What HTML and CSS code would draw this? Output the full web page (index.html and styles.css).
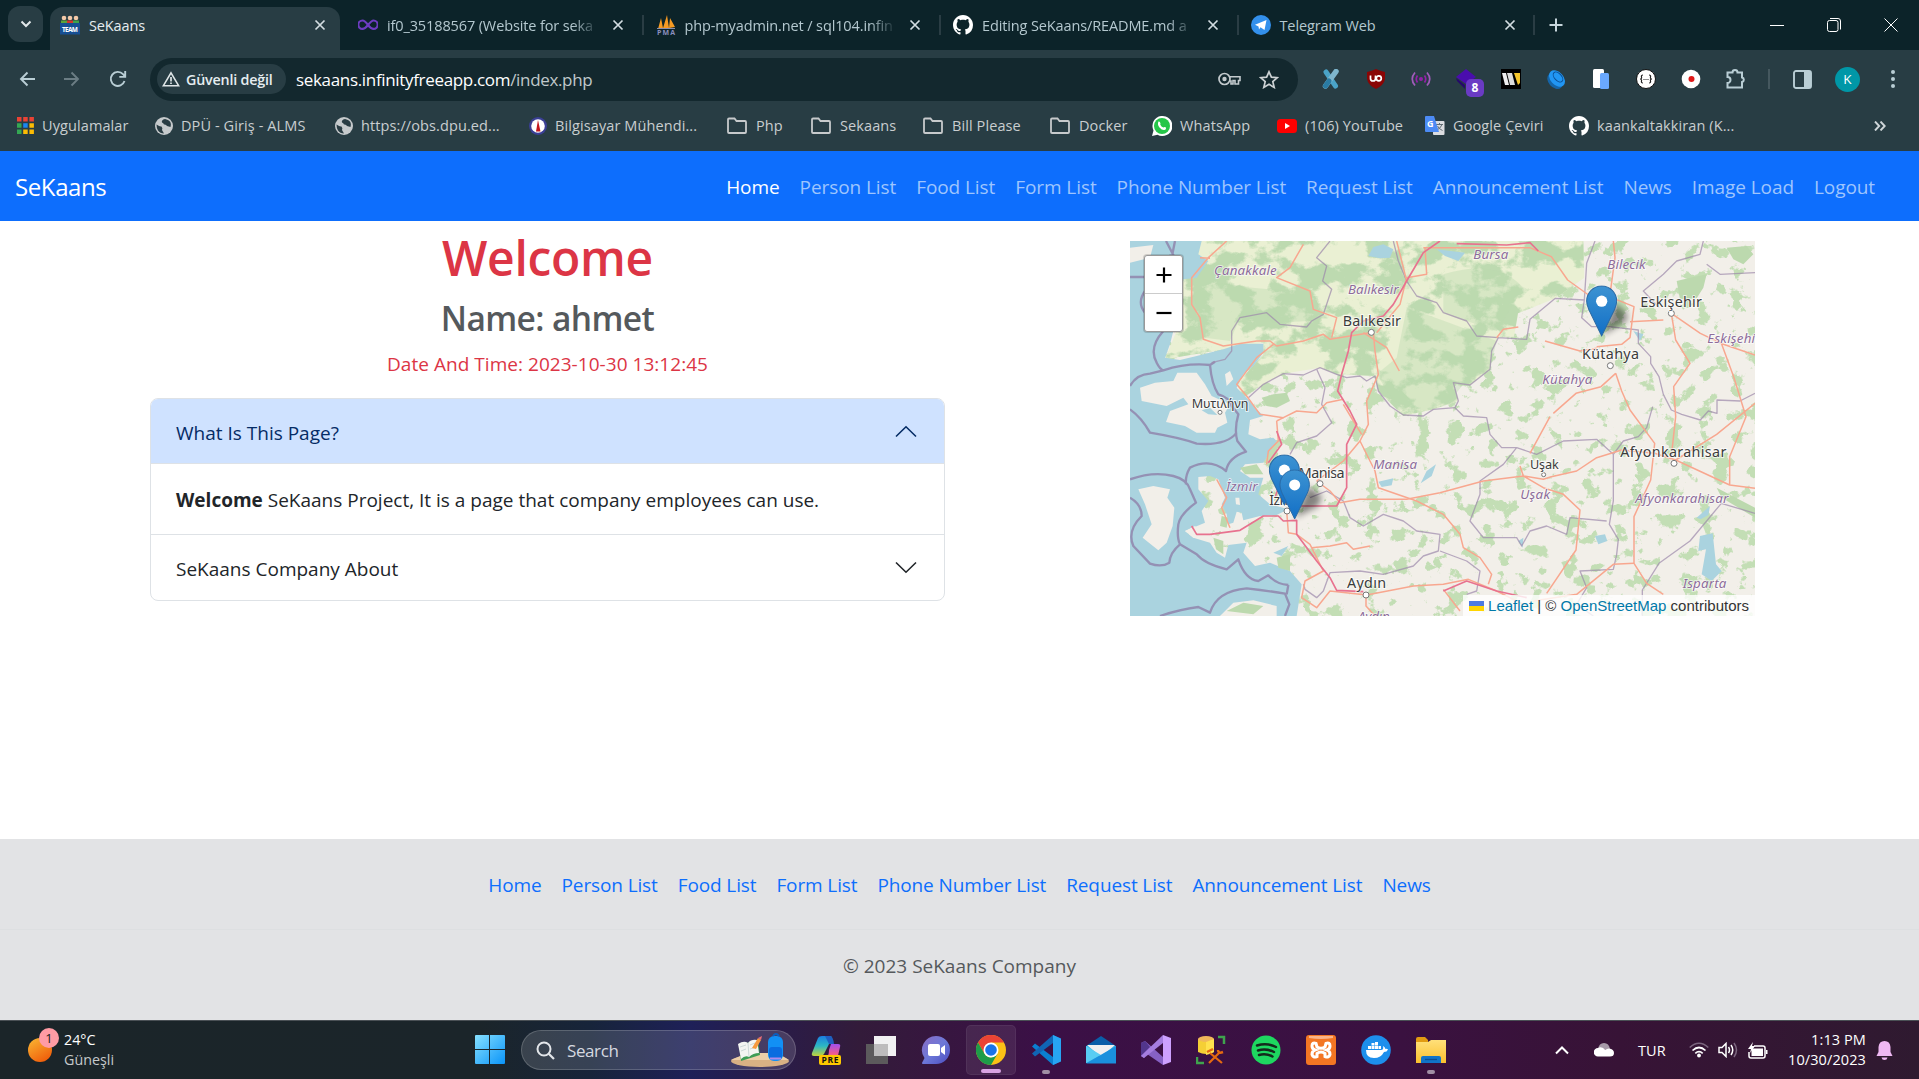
FILE: index.html
```html
<!DOCTYPE html>
<html lang="en">
<head>
<meta charset="utf-8">
<title>SeKaans</title>
<link rel="stylesheet" href="styles.css">
</head>
<body>
<svg class="defs" width="0" height="0">
  <defs>
    <linearGradient id="gPin" x1="0" y1="0" x2="0" y2="1"><stop offset="0" stop-color="#3d93d2"/><stop offset="1" stop-color="#126fc6"/></linearGradient>
    <linearGradient id="gSun" x1="0" y1="0" x2=".6" y2="1"><stop offset="0" stop-color="#f9b934"/><stop offset="1" stop-color="#f0600c"/></linearGradient>
    <linearGradient id="gWin" x1="0" y1="0" x2="1" y2="1"><stop offset="0" stop-color="#86e0ff"/><stop offset="1" stop-color="#0a94f8"/></linearGradient>
    <linearGradient id="gChat" x1="0" y1="0" x2="1" y2="1"><stop offset="0" stop-color="#8a6cc4"/><stop offset=".5" stop-color="#6d78d8"/><stop offset="1" stop-color="#4a4cc0"/></linearGradient>
    <linearGradient id="gCo1" x1="0" y1="0" x2="0" y2="1"><stop offset="0" stop-color="#1b7fe0"/><stop offset=".5" stop-color="#2cb7c4"/><stop offset="1" stop-color="#c3d43a"/></linearGradient>
    <linearGradient id="gCo2" x1="0" y1="0" x2="0" y2="1"><stop offset="0" stop-color="#a04ff0"/><stop offset=".6" stop-color="#ee5a90"/><stop offset="1" stop-color="#ff9a4a"/></linearGradient>
    <linearGradient id="gFold" x1="0" y1="0" x2="0" y2="1"><stop offset="0" stop-color="#ffe07a"/><stop offset="1" stop-color="#fbc02d"/></linearGradient>
    <symbol id="globe" viewBox="0 0 18 18"><circle cx="9" cy="9" r="9" fill="#c6cacc"/><path d="M1.5 7.5Q5 10 6.500 9.500Q8 11 7 13L9 16.500Q5 16.500 3 13.500Q1.500 11 1.500 7.500ZM10 2Q6 3 7 5.500Q8.500 6 9 7.500Q11 7 12 9L15.500 10Q17 5 13 3Z" fill="#2a3d44"/></symbol>
    <symbol id="folder" viewBox="0 0 22 18"><path d="M2 2.500Q2 1.500 3 1.500H8.500L10.500 4H19Q20 4 20 5V15Q20 16 19 16H3Q2 16 2 15Z" fill="none" stroke="#c7cacc" stroke-width="1.800"/></symbol>
    <symbol id="github" viewBox="0 0 16 16"><path fill="#fff" d="M8 0C3.580 0 0 3.580 0 8c0 3.540 2.290 6.530 5.470 7.590.4.070.550-.170.550-.380 0-.190-.010-.820-.010-1.490-2.010.370-2.530-.490-2.690-.940-.090-.230-.480-.940-.820-1.130-.280-.150-.680-.520-.010-.530.630-.010 1.080.580 1.230.820.720 1.210 1.870.870 2.330.660.070-.520.280-.870.510-1.070-1.780-.2-3.640-.890-3.640-3.950 0-.870.310-1.590.820-2.150-.080-.2-.360-1.020.080-2.120 0 0 .670-.210 2.200.820.640-.180 1.320-.270 2-.270s1.360.090 2 .270c1.530-1.040 2.200-.820 2.200-.820.440 1.100.160 1.920.080 2.120.510.560.820 1.270.820 2.150 0 3.070-1.870 3.750-3.650 3.950.290.250.540.730.540 1.480 0 1.070-.010 1.930-.010 2.200 0 .210.150.460.550.380A8 8 0 0 0 16 8c0-4.420-3.580-8-8-8"/></symbol>
    <symbol id="close" viewBox="0 0 12 12"><path d="M1.500 1.500 10.500 10.500M10.500 1.500 1.500 10.500" fill="none" stroke="currentColor" stroke-width="1.700"/></symbol>
    <symbol id="pin" viewBox="0 0 25 41"><path fill="url(#gPin)" stroke="#2a6aa5" stroke-width=".8" d="M12.500.500C5.900.500.500 5.900.500 12.600c0 2.300.9 4.700 1.800 6.900L12.500 40.400l10.200-20.900c.9-2.100 1.800-4.500 1.800-6.900C24.500 5.900 19.100.500 12.500.500z"/><circle cx="12.500" cy="12.700" r="4.500" fill="#fff"/></symbol>
  </defs>
</svg>

<header class="tabstrip">
  <button class="tab-search"><svg width="12" height="8" viewBox="0 0 12 8"><path d="M1.500 1.500 6 6 10.500 1.500" fill="none" stroke="#e2e8ea" stroke-width="2"/></svg></button>
  <div class="tab tab-active">
    <svg class="fav" viewBox="0 0 20 20"><circle cx="4" cy="3" r="2.300" fill="#f3c9a8"/><circle cx="10" cy="3" r="2.300" fill="#f3c9a8"/><circle cx="16" cy="3" r="2.300" fill="#f3c9a8"/><path d="M1 5.500h6v2.500H1z" fill="#5aa33a"/><path d="M7 5.500h6v2.500H7z" fill="#d2342c"/><path d="M13 5.500h6v2.500h-6z" fill="#3fa34d"/><path d="M0 8h20v11.500H0z" fill="#164f94"/><text x="10" y="16.500" font-size="6.500" font-weight="700" textLength="16" text-anchor="middle" fill="#fff">TEAM</text></svg>
    <span class="tab-title">SeKaans</span><svg class="x"><use href="#close"/></svg>
  </div>
  <div class="tab">
    <svg class="fav" viewBox="0 0 20 20"><path d="M10 10C7.500 6.500 6 5.500 4.500 5.500a4.200 4.200 0 0 0 0 8.400C6 13.900 7.500 13 10 10S14 5.500 15.500 5.500a4.200 4.200 0 0 1 0 8.400C14 13.900 12.500 13 10 10" fill="none" stroke="#6d3cc0" stroke-width="2.200"/></svg>
    <span class="tab-title fade">if0_35188567 (Website for seka</span><svg class="x"><use href="#close"/></svg>
  </div>
  <div class="tab">
    <svg class="fav" viewBox="0 0 20 20"><path d="M2 14 5 3 7 13ZM7 13 11 0 13 13ZM13 13 14 3 19 12Z" fill="#f59a23"/><path d="M1 13h18v1H1z" fill="#8a8fb0"/><text x="10" y="19.500" font-size="7" font-weight="700" textLength="18" text-anchor="middle" fill="#8b8fbe">PMA</text></svg>
    <span class="tab-title fade">php-myadmin.net / sql104.infin</span><svg class="x"><use href="#close"/></svg>
  </div>
  <div class="tab">
    <svg class="fav"><use href="#github"/></svg>
    <span class="tab-title fade">Editing SeKaans/README.md a</span><svg class="x"><use href="#close"/></svg>
  </div>
  <div class="tab">
    <svg class="fav" viewBox="0 0 20 20"><circle cx="10" cy="10" r="10" fill="#3390ec"/><path d="M4 9.800 15.500 5 13.500 15 9.500 12.200 8 14.500 7.500 11.500Z" fill="#fff"/></svg>
    <span class="tab-title">Telegram Web</span><svg class="x"><use href="#close"/></svg>
  </div>
  <svg class="newtab" viewBox="0 0 14 14"><path d="M7 .500V13.500M.500 7H13.500" stroke="#c7d6dc" stroke-width="2"/></svg>
  <div class="winbtns">
    <svg width="14" height="14"><path d="M0 7.500H14" stroke="#fff"/></svg>
    <svg width="14" height="14"><rect x=".5" y="2.500" width="10.500" height="11" rx="2" fill="none" stroke="#fff"/><path d="M3 .500H11Q13.500.500 13.500 3V11.500" fill="none" stroke="#fff"/></svg>
    <svg width="14" height="14"><path d="M.500.500 13.500 13.500M13.500.500.500 13.500" stroke="#fff"/></svg>
  </div>
</header>

<div class="toolbar">
  <svg width="16" height="16" viewBox="0 0 16 16"><path d="M16 8H2M8.500 1.500 2 8l6.500 6.500" fill="none" stroke="#b9ced5" stroke-width="1.900"/></svg>
  <svg width="16" height="16" viewBox="0 0 16 16"><path d="M0 8H14M7.500 1.500 14 8l-6.500 6.500" fill="none" stroke="#6b7d84" stroke-width="1.900"/></svg>
  <svg width="18" height="18" viewBox="0 0 18 18"><path d="M15.500 11A7 7 0 1 1 14 4.200L16 6.500M16.200 1V6.900H10.300" fill="none" stroke="#b9ced5" stroke-width="1.900"/></svg>
  <div class="omnibox">
    <div class="chip"><svg width="18" height="16" viewBox="0 0 18 16"><path d="M9 1.800 16.600 14.700H1.400Z" fill="none" stroke="#dfe5e7" stroke-width="1.600"/><path d="M9 6V10.500M9 11.500V13" stroke="#dfe5e7" stroke-width="1.700"/></svg><span>Güvenli değil</span></div>
    <div class="url">sekaans.infinityfreeapp.com<span>/index.php</span></div>
    <svg class="key" width="23" height="14" viewBox="0 0 23 14"><circle cx="6.500" cy="7" r="5.500" fill="none" stroke="#c3cacd" stroke-width="1.700"/><circle cx="6.500" cy="7" r="2.200" fill="#c3cacd"/><path d="M11.500 4.800H22V8.500H20.500V12H17V8.500H15V12H13V9H11.500" fill="none" stroke="#c3cacd" stroke-width="1.600"/></svg>
    <svg width="20" height="19" viewBox="0 0 20 19"><path d="M10 1.800 12.400 7.200 18.300 7.700 13.800 11.600 15.200 17.400 10 14.300 4.800 17.400 6.200 11.600 1.700 7.700 7.600 7.200Z" fill="none" stroke="#cdd2d4" stroke-width="1.700"/></svg>
  </div>
  <div class="exts">
    <svg viewBox="0 0 20 20"><path d="M5 3 14.500 17" stroke="#4aa3c7" stroke-width="5" stroke-linecap="round"/><path d="M15 2.500 4.500 17" stroke="#7fb6cd" stroke-width="5.500" stroke-linecap="round"/><path d="M8 12 4.500 17" stroke="#2a7ba3" stroke-width="5" stroke-linecap="round"/></svg>
    <svg viewBox="0 0 20 20"><path d="M10 0Q14 2 19 3V10Q18 16 10 20Q2 16 1 10V3Q6 2 10 0Z" fill="#8a0505"/><path d="M4.500 6.500V9.500Q4.500 12 7 12T9.500 9.500V6.500" fill="none" stroke="#fff" stroke-width="1.700"/><circle cx="12.800" cy="9.300" r="2.500" fill="none" stroke="#fff" stroke-width="1.700"/></svg>
    <svg viewBox="0 0 20 20"><g fill="none" stroke="#a05cba" stroke-width="1.700"><path d="M4 3.500Q-1.500 10 4 16.500M16 3.500Q21.500 10 16 16.500"/><path d="M6.500 6.500Q4 10 6.500 13.500M13.500 6.500Q16 10 13.500 13.500" stroke="#9320a8"/></g><circle cx="10" cy="10" r="2" fill="#9320a8"/></svg>
    <span class="badged"><svg viewBox="0 0 20 20"><path d="M10 0 20 8 10 15 0 8Z" fill="#4a0dae"/><path d="M0 9 9 16V20L1 12Z" fill="#25086b"/></svg><b>8</b></span>
    <svg viewBox="0 0 20 20"><path d="M0 0H20V20H0Z" fill="#000"/><path d="M1 4H5L8 16H4Z" fill="#eee"/><path d="M6 4H11L14 16H9Z" fill="#ddd"/><path d="M13 4H19V14L17 16Z" fill="#f5c52b"/></svg>
    <svg viewBox="0 0 20 20"><ellipse cx="9" cy="12" rx="6.500" ry="9" fill="#1565a8" transform="rotate(-42 9 12)"/><ellipse cx="11" cy="9.500" rx="6.500" ry="9.500" fill="#2196f3" transform="rotate(-42 11 9.500)"/><ellipse cx="12" cy="8" rx="3.500" ry="6" fill="none" stroke="#0c4f94" transform="rotate(-42 12 8)"/></svg>
    <svg viewBox="0 0 20 20"><rect x="2" y="0" width="11" height="19" rx="1.500" fill="#fff"/><rect x="9" y="4" width="9" height="16" rx="1.500" fill="#6aa9ff"/></svg>
    <svg viewBox="0 0 20 20"><circle cx="10" cy="10" r="9.500" fill="#fff" stroke="#111" stroke-width="1"/><path d="M7 6Q5 6 5.500 8T4 10Q6 10 5.500 12T7 14M13 6Q15 6 14.500 8T16 10Q14 10 14.500 12T13 14" fill="none" stroke="#222" stroke-width="1.200"/><path d="M7.500 10.500H12.500" stroke="#222" stroke-dasharray="1 1"/></svg>
    <svg viewBox="0 0 20 20"><circle cx="10" cy="10" r="9.300" fill="#fff"/><circle cx="10.500" cy="10" r="3" fill="#e01818"/></svg>
    <svg viewBox="0 0 20 20"><path d="M1.500 3.500H6.500A2.300 2.300 0 0 1 11.500 3.500H16V8.500A2.300 2.300 0 0 1 16 13V18.500H1.500V14A3 3 0 0 0 1.500 8Z" fill="none" stroke="#b9ced5" stroke-width="2"/></svg>
  </div>
  <i class="vsep"></i>
  <svg class="panel" width="19" height="19" viewBox="0 0 19 19"><rect x="1" y="1" width="17" height="17" rx="2" fill="none" stroke="#b9ced5" stroke-width="1.900"/><path d="M11 1H18V18H11Z" fill="#b9ced5"/></svg>
  <div class="avatar">K</div>
  <svg class="dots" width="4" height="18" viewBox="0 0 4 18" fill="#b9ced5"><circle cx="2" cy="2" r="2"/><circle cx="2" cy="9" r="2"/><circle cx="2" cy="16" r="2"/></svg>
</div>

<nav class="bookmarks">
  <a><svg width="17" height="17" viewBox="0 0 17 17"><path d="M0 0H4.500V4.500H0ZM6.200 0H10.700V4.500H6.200ZM12.400 0H16.900V4.500H12.400Z" fill="#ea4335"/><path d="M0 6.200H4.500V10.700H0ZM0 12.400H4.500V16.900H0Z" fill="#34a853"/><path d="M6.200 6.200H10.700V10.700H6.200Z" fill="#1a86f0"/><path d="M12.400 6.200H16.900V10.700H12.400ZM6.200 12.400H10.700V16.900H6.200ZM12.400 12.400H16.900V16.900H12.400Z" fill="#fbbc04"/></svg><span>Uygulamalar</span></a>
  <a><svg width="18" height="18"><use href="#globe"/></svg><span>DPÜ - Giriş - ALMS</span></a>
  <a><svg width="18" height="18"><use href="#globe"/></svg><span>https://obs.dpu.ed...</span></a>
  <a><svg width="18" height="18" viewBox="0 0 18 18"><circle cx="9" cy="9" r="9" fill="#3a3f95"/><circle cx="9" cy="9" r="6.800" fill="#fff"/><path d="M9 3 11.500 14.500H7Z" fill="#c4161c"/></svg><span>Bilgisayar Mühendi...</span></a>
  <a><svg width="22" height="18"><use href="#folder"/></svg><span>Php</span></a>
  <a><svg width="22" height="18"><use href="#folder"/></svg><span>Sekaans</span></a>
  <a><svg width="22" height="18"><use href="#folder"/></svg><span>Bill Please</span></a>
  <a><svg width="22" height="18"><use href="#folder"/></svg><span>Docker</span></a>
  <a><svg width="20" height="20" viewBox="0 0 20 20"><path d="M0 20 1.500 14.500A10 10 0 1 1 5.500 18.700Z" fill="#fff"/><circle cx="10" cy="10" r="8" fill="#25c648"/><path d="M6.500 5.500Q8 5 8.500 7.500Q8 8.500 8.500 9Q9.500 11 11.500 11.500Q12.500 10.500 14 11.500Q14.500 13.500 12.500 14Q10 14.500 7.500 11.500Q5 8.500 6.500 5.500Z" fill="#fff"/></svg><span>WhatsApp</span></a>
  <a><svg width="20" height="14" viewBox="0 0 20 14"><rect width="20" height="14" rx="3.500" fill="#f00"/><path d="M8 4 13 7 8 10Z" fill="#fff"/></svg><span>(106) YouTube</span></a>
  <a><svg width="20" height="20" viewBox="0 0 20 20"><rect x="8" y="5" width="11.500" height="14" rx="1" fill="#dadce0"/><path d="M11 8.500H18M14.500 7V8.500M17 8.500Q15.500 12.500 12 14M12.500 10Q14 13 17.500 14.500" stroke="#5f6b72" fill="none"/><path d="M0 1Q0 0 1 0H9L14 16H1Q0 16 0 15Z" fill="#4c8bf5"/><text x="2" y="10.500" font-size="9" font-weight="700" fill="#fff">G</text></svg><span>Google Çeviri</span></a>
  <a><svg width="20" height="20"><use href="#github"/></svg><span>kaankaltakkiran (K...</span></a>
  <a class="more"><svg width="12" height="10" viewBox="0 0 12 10"><path d="M1 .500 5.200 5 1 9.500M6.500.500 10.700 5 6.500 9.500" fill="none" stroke="#cfd6d9" stroke-width="1.900"/></svg></a>
</nav>

<nav class="navbar">
  <a class="brand">SeKaans</a>
  <div class="links"><a class="current">Home</a><a>Person List</a><a>Food List</a><a>Form List</a><a>Phone Number List</a><a>Request List</a><a>Announcement List</a><a>News</a><a>Image Load</a><a>Logout</a></div>
</nav>

<main class="content">
  <section class="intro">
    <h1>Welcome</h1>
    <h2>Name: ahmet</h2>
    <p class="date">Date And Time: 2023-10-30 13:12:45</p>
    <div class="accordion">
      <div class="acc-head open"><span>What Is This Page?</span><svg width="22" height="13" viewBox="0 0 22 13"><path d="M1 11.500 11 1.800 21 11.500" fill="none" stroke="#052c65" stroke-width="1.600"/></svg></div>
      <div class="acc-body"><strong>Welcome</strong> <span>SeKaans Project, It is a page that company employees can use.</span></div>
      <div class="acc-head"><span>SeKaans Company About</span><svg width="22" height="13" viewBox="0 0 22 13"><path d="M1 1.500 11 11.200 21 1.500" fill="none" stroke="#212529" stroke-width="1.600"/></svg></div>
    </div>
  </section>

  <section class="map">
    <svg class="tiles" viewBox="0 0 1875 1125">
      <defs>
        <filter id="woods" x="0" y="0" width="100%" height="100%" color-interpolation-filters="sRGB"><feTurbulence type="fractalNoise" baseFrequency=".02 .022" numOctaves="6" seed="7"/><feColorMatrix values="0 0 0 0 .765  0 0 0 0 .87  0 0 0 0 .71  0 15 0 0 -8.700"/></filter>
        <filter id="dense" x="0" y="0" width="100%" height="100%" color-interpolation-filters="sRGB"><feTurbulence type="fractalNoise" baseFrequency=".012 .015" numOctaves="6" seed="3"/><feColorMatrix values="0 0 0 0 .74  0 0 0 0 .855  0 0 0 0 .69  0 9 0 0 -4.100"/></filter>
        <filter id="pinshade" x="-50%" y="-50%" width="200%" height="200%"><feGaussianBlur stdDeviation="9"/></filter>
        <clipPath id="north"><path d="M120 0H1360L1363 110 1276 172 1164 217 1152 287 1105 290 1085 330 1080 385 1020 432 970 425 985 480 910 505 820 525 745 450 735 405 620 400 570 380 460 398 400 430 340 470 320 430 400 340 400 305 105 355 160 220Z"/></clipPath>
        <g id="coastline">
          <path d="M0 0H215L205 40 235 60 200 110 160 115 150 220 130 270 120 310 105 350 150 357 200 345 280 325 330 308 400 308 400 335 370 375 340 400 320 440 350 470 380 505 400 525 360 537 355 580 390 595 430 590 440 600 415 640 400 665 345 670 330 690 360 710 400 710 385 760 420 790 475 805 440 822 390 825 340 838 335 815 320 812 310 845 295 850 290 820 275 790 285 770 265 715 240 705 205 708 205 745 235 780 215 810 225 845 165 870 190 890 240 905 260 935 285 950 295 912 350 905 340 935 375 975 420 965 480 990 515 1030 500 1125H0Z"/>
          <path d="M715 45 730 18 760 10 790 25 780 50 750 52ZM920 25 1005 35 985 60 945 45ZM745 722 790 712 785 733 755 738ZM872 727 890 690 918 670 905 705ZM1710 885 1748 877 1758 970 1775 990 1745 1020 1715 1000 1728 925 1705 930ZM1395 885 1425 880 1432 900 1405 910ZM1700 830 1740 795 1735 822 1712 835ZM430 935 475 915 455 945ZM1165 900 1180 890 1178 920ZM1510 270 1540 280 1530 300Z"/>
        </g>
      </defs>
      <rect width="1875" height="1125" fill="#f2efe9"/>
      <rect width="1875" height="1125" filter="url(#woods)"/>
      <g clip-path="url(#north)"><rect width="1875" height="1125" fill="#eaf0d3"/><rect width="1400" height="530" filter="url(#dense)"/></g>
      <path d="M190 160Q250 110 320 135Q450 150 540 150Q560 200 540 240L430 245 400 218 330 230 300 300 225 290ZM830 200Q950 240 1100 300L1080 380 1000 430 960 480 880 510 790 480 740 400 800 350ZM940 100Q1100 50 1180 140L1100 270 1010 240 940 215Z" fill="#bbd9ae" opacity=".4"/>
      <use href="#coastline" fill="#aad3df"/>
      <g fill="#f2efe9"><path d="M0 20 70 12 60 50 0 65ZM30 440 75 425 130 420 142 395 200 395 225 430 245 465 300 490 285 515 292 545 262 560 255 575 200 575 165 555 108 543 120 510 175 490 160 470 110 495 35 480ZM25 745 70 735 120 745 112 770 133 800 128 855 110 905 85 928 38 890 65 850 45 790ZM270 1125 310 1085 370 1078 440 1095 440 1125ZM285 400 300 390 310 415 290 435ZM316 770 328 770 330 792 318 790ZM165 870 195 855 220 880 190 890Z"/></g>
      <path d="M215 508 240 500 262 522 235 520Z" fill="#aad3df"/>
      <path d="M395 470 430 460 470 455 480 480 440 500 410 495ZM330 680 380 670 400 700 345 700ZM250 890 280 900 280 940 258 925ZM440 950 480 940 480 990 445 980ZM275 825 295 830 290 860 270 855ZM1760 740 1875 800V830L1775 770ZM1640 120 1690 108 1730 100 1720 140 1700 172 1650 175ZM1790 20 1850 15 1870 40 1840 70 1810 55ZM290 1110 340 1085 400 1095 370 1120Z" fill="#bcd9ae"/>
      <g fill="none" stroke="#8c7ba6" stroke-width="7" opacity=".75" stroke-linejoin="round">
        <path d="M108 0 130 42 118 45M135 0 128 35M0 108H42M45 150Q20 185 45 215M100 270Q55 320 80 365Q90 385 100 388M0 435Q20 400 60 398L100 388Q170 365 240 372Q245 430 265 460Q300 470 305 495L325 520Q312 565 322 600L348 632Q295 650 288 690Q240 650 180 680Q165 705 168 730M240 372 255 362M0 505Q35 530 60 575Q150 590 200 608Q290 615 320 575M0 715Q70 690 130 705Q170 715 180 745L198 785Q150 820 145 850Q140 890 150 910Q120 935 118 965Q95 980 60 968L10 915Q-10 870 35 825Q35 790 0 770M150 910 200 940Q225 970 290 985L325 955Q345 1015 385 1020L415 1003Q440 1030 475 1032M90 1125Q150 1105 205 1098L240 1115Q260 1050 350 1042Q420 1050 465 1058L478 1090 465 1125M475 1032 470 1060"/>
      </g>
      <g fill="none" stroke="#9d89ab" stroke-width="4" opacity=".7" stroke-linejoin="round">
        <path d="M600 0 560 50 590 75 578 120 605 145 580 220 545 240 530 258 450 250 410 215 330 230 305 270V330L285 355 245 365M355 470 400 430 460 398 520 402 570 380 620 400 650 410 690 405 710 420 735 405 745 450 780 495 820 522 880 525 910 505 975 500 985 480 970 425 1020 432 1080 385 1085 330 1105 290 1040 285 1010 240 940 215 920 185 860 165 830 120 805 60 790 0M1105 290 1190 295 1200 235 1276 172 1363 177 1370 67 1395 0M1363 177 1355 230 1385 257 1438 257 1525 267 1525 307 1562 347 1562 367 1587 407 1600 460 1624 507 1655 520 1711 537 1735 510 1761 517V477L1830 480 1875 457"/>
        <path d="M1568 497 1550 560 1525 587 1480 600 1450 640V780L1438 850 1465 895 1460 940 1450 985 1350 990 1370 1040 1340 1090 1390 1125M975 500 1000 525 1070 530 1080 580 1115 620 1160 620 1120 670 1050 720 1050 760 1020 840 1060 890 1160 890 1175 915 1200 870 1250 855 1310 880 1320 830 1430 840M1160 620 1220 640 1300 600 1400 595 1450 640M560 385 585 440 575 490 605 545 560 585 500 605 480 640M540 770 590 750 640 780 660 830 700 855 760 820 820 840 860 870 930 880 925 930 880 945 850 975 760 1000 690 990 600 995 580 1050 560 1070 525 1045 520 1030M930 930 1010 960 1050 990 1040 1050 1010 1060M1537 1125V1047L1587 967 1680 900 1774 787 1875 817M1587 200 1540 150 1600 100 1640 60 1710 40 1720 0M1730 70 1770 100 1875 95"/>
      </g>
      <g fill="none" stroke="#f8a78f" stroke-width="4.500" stroke-linejoin="round">
        <path d="M290 0 235 50 185 110V190L210 230 220 295 280 315 380 300 420 300 440 315 520 300 580 280 600 295 720 275M430 310 380 350 320 430 350 465 390 520 460 530 500 510 560 515 590 485 640 475M210 50 240 52M520 10 480 80 440 110 540 150 550 205 620 230 605 290M730 275 735 330 745 400 710 480 715 550 690 600 735 690 745 740 860 780 940 820 990 880 1000 920 1050 950 1085 1000 1075 1030M640 490 670 540 695 580M690 600 640 660 560 720M700 275 770 320 808 390M885 20 890 100 830 110 810 190 740 275M800 0 815 60 830 120M880 20H1200"/>
        <path d="M560 720 600 750 630 785 690 775 830 775 930 755 1060 720 1180 705 1240 715 1264 707 1340 690 1400 650 1475 627 1574 637 1637 657 1799 732 1875 742M1457 397 1475 450 1500 507 1574 607 1562 717 1512 827V967L1550 1027 1600 1060M1457 397 1413 437 1338 457 1270 517M1624 217 1637 297 1680 367 1631 437 1637 527 1624 647M1624 217 1711 277 1780 310 1875 342M1500 242 1600 237M1400 317 1475 310 1500 290 1512 197 1413 157 1380 165 1313 117 1264 47 1200 20M1450 0 1455 50 1440 160M1774 307 1811 407 1848 527 1799 647V732M1875 487 1760 580 1637 657M1260 527 1200 637M1170 675 1180 705 1240 740 1300 760 1350 807 1338 927 1250 1057M1245 300 1350 330 1400 322M1100 290 1120 265 1165 258"/>
        <path d="M470 810 475 875 500 880 540 910 560 950 580 990 525 1020 515 1070 560 1100 600 1050 710 1062 850 1035 940 1030 1015 1015 1100 1050M545 920 600 915 650 905 670 925 720 915M708 1062V1095L735 1125M260 715 290 770 275 800 300 860M440 540 460 530M440 540 445 600 415 630 410 670M1512 967 1450 970 1340 1060 1210 1080M940 1045 990 1110M1100 1050 1200 1100"/>
      </g>
      <g fill="none" stroke="#e8728f" stroke-width="5" stroke-linejoin="round">
        <path d="M930 0 880 35 830 120 790 190 760 225 700 240 665 275 655 330 635 400 623 450 660 510 680 550 650 610V740L620 795 500 795M185 855 200 880 240 880 330 868 400 825 445 825 460 840 500 838V880L560 960 600 1010 620 1048 700 1052M440 570 455 610 415 665M445 740 435 770M940 1050 1010 1020 1100 1050 1190 1070M980 8 1130 12 1200 5 1225 30"/>
      </g>
      <g fill="#fff" stroke="#777" stroke-width="3"><circle cx="724" cy="274" r="9"/><circle cx="270" cy="514" r="6"/><circle cx="570" cy="728" r="9"/><circle cx="471" cy="810" r="9"/><circle cx="708" cy="1062" r="9"/><circle cx="1624" cy="217" r="9"/><circle cx="1441" cy="374" r="9"/><circle cx="1241" cy="701" r="6"/><circle cx="1632" cy="667" r="9"/></g>
      <g class="province">
        <text x="252" y="103" textLength="188">Çanakkale</text><text x="654" y="160" textLength="152">Balıkesir</text><text x="1030" y="53" textLength="105">Bursa</text><text x="1432" y="83" textLength="115">Bilecik</text><text x="1732" y="306" textLength="143">Eskişehi</text><text x="1237" y="429" textLength="150">Kütahya</text><text x="730" y="684" textLength="131">Manisa</text><text x="288" y="751" textLength="95">İzmir</text><text x="1171" y="774" textLength="89">Uşak</text><text x="1516" y="787" textLength="279">Afyonkarahisar</text><text x="1658" y="1041" textLength="131">Isparta</text><text x="684" y="1141" textLength="95">Aydın</text>
      </g>
      <g class="city">
        <text x="638" y="254" textLength="175">Balıkesir</text><text x="185" y="500" textLength="170" font-size="38">Μυτιλήνη</text><text x="506" y="710" textLength="138">Manisa</text><text x="418" y="792" textLength="95">İzmir</text><text x="651" y="1042" textLength="117">Aydın</text><text x="1531" y="198" textLength="185">Eskişehir</text><text x="1356" y="355" textLength="171">Kütahya</text><text x="1200" y="685" textLength="86" font-size="38">Uşak</text><text x="1471" y="647" textLength="318">Afyonkarahisar</text>
      </g>
      <g fill="#000" opacity=".45" filter="url(#pinshade)"><path d="M1418 282 1455 185 1490 215 1490 240ZM495 830 535 735 575 765 565 795Z"/></g>
      <use href="#pin" x="1368" y="133" width="94" height="154"/><use href="#pin" x="416" y="640" width="94" height="154"/><use href="#pin" x="447" y="685" width="94" height="151"/>
    </svg>
    <div class="zoom"><span><svg width="16" height="16"><path d="M8 .500V15.500M.500 8H15.500" stroke="#000" stroke-width="2.200"/></svg></span><span><svg width="16" height="16"><path d="M.500 8H15.500" stroke="#000" stroke-width="2.200"/></svg></span></div>
    <div class="attribution"><svg width="15" height="10"><path d="M0 0H15V5H0Z" fill="#4c7be1"/><path d="M0 5H15V10H0Z" fill="#ffd500"/></svg><span><a>Leaflet</a> | © <a>OpenStreetMap</a> contributors</span></div>
  </section>
</main>

<footer class="footer">
  <div class="links"><a>Home</a><a>Person List</a><a>Food List</a><a>Form List</a><a>Phone Number List</a><a>Request List</a><a>Announcement List</a><a>News</a></div>
  <p>© 2023 SeKaans Company</p>
</footer>

<div class="taskbar">
  <div class="weather">
    <svg width="32" height="36" viewBox="0 0 32 36"><circle cx="12" cy="22" r="12" fill="url(#gSun)"/><circle cx="21" cy="10" r="10" fill="#ff9ba4"/><text x="21" y="15" text-anchor="middle" font-size="13" fill="#222">1</text></svg>
    <div>24°C<br><span>Güneşli</span></div>
  </div>
  <svg class="start" width="30" height="30" viewBox="0 0 30 30"><path d="M0 1Q0 0 1 0H14V14H0ZM15 0H29Q30 0 30 1V14H15ZM0 15H14V29H1Q0 29 0 28ZM15 15H30V28Q30 29 29 29H15Z" fill="url(#gWin)"/></svg>
  <div class="search">
    <svg width="19" height="19" viewBox="0 0 19 19"><circle cx="8" cy="8" r="6.500" fill="none" stroke="#e3e6ea" stroke-width="2"/><path d="M12.700 12.700 18 18" stroke="#e3e6ea" stroke-width="2.200"/></svg>
    <span>Search</span>
    <svg class="art" width="58" height="34" viewBox="0 0 58 34"><ellipse cx="29" cy="28" rx="29" ry="6" fill="#d9b184"/><path d="M0 27H58Q50 21 40 20H16Z" fill="#edcfa8"/><path d="M8 11 27 8 29 22 10 28Z" fill="#3f9d57"/><path d="M7 11Q13 7 17 10Q20 6 26 7L28 20Q22 20 18 24Q14 22 10 26Z" fill="#f4f5f2"/><path d="M17 10 18 24M9 14 15 12M10 18 15 16M19 12 24 10M19 16 25 14" stroke="#bcc" stroke-width=".7"/><path d="M21 15 27 5 30 7 25 16Z" fill="#f59a3e"/><path d="M27 5 30 7 31 3Z" fill="#ea6d77"/><rect x="37" y="3" width="15" height="25" rx="6" fill="#1290f5"/><path d="M42 3Q45-1 48 3" fill="none" stroke="#0b5fc0" stroke-width="2"/><rect x="38" y="14" width="13" height="12" rx="3" fill="#0a6ce0"/><path d="M39 25.500H50" stroke="#b08bea" stroke-width="2"/></svg>
  </div>
  <div class="apps">
    <div><svg viewBox="0 0 30 30"><path d="M7 3Q8 1 11 1H19Q22 1 20 5L13 19Q12 21 9 21H3Q0 21 1 18Z" fill="url(#gCo1)"/><path d="M20 9H27Q30 9 29 12L26 25H14Q18 22 18 15Z" fill="url(#gCo2)"/><path d="M14 1H19Q22 1 23 9H18Z" fill="#1f5fc0"/><rect x="8" y="20" width="22" height="10" rx="2" fill="#fdc900"/><text x="19" y="28" font-size="8.500" font-weight="700" text-anchor="middle" textLength="17" fill="#111">PRE</text></svg></div>
    <div><svg viewBox="0 0 30 30"><rect x="0" y="9" width="22" height="20" fill="#5c5a5c"/><rect x="8" y="1" width="22" height="20" fill="#f1f1f2"/><rect x="8" y="9" width="14" height="12" fill="#bdbcbd"/></svg></div>
    <div><svg viewBox="0 0 30 30"><path d="M15 1A14 14 0 0 1 15 29H2Q0 29 2 26L3.500 23A14 14 0 0 1 15 1Z" fill="url(#gChat)"/><rect x="7" y="9" width="12" height="12" rx="2" fill="#fff"/><path d="M20 13 24 10V20L20 17Z" fill="#fff"/></svg></div>
    <div class="active"><svg viewBox="0 0 30 30"><circle cx="15" cy="15" r="15" fill="#fbc116"/><path d="M2 7.500A15 15 0 0 1 28 7.500H15L8.500 18.700Z" fill="#ea4335"/><path d="M2 7.500 8.500 18.700Q11 22.500 15 22.500L21.500 18.700 15 30A15 15 0 0 1 2 7.500Z" fill="#1e9c49"/><circle cx="15" cy="15" r="7.500" fill="#fff"/><circle cx="15" cy="15" r="5.800" fill="#1a73e8"/></svg></div>
    <div class="running"><svg viewBox="0 0 30 30"><path d="M22 0 29 3.500V26.500L22 30 1 11.500 4 8.500 22 22Z" fill="#0a7fd0"/><path d="M22 8 4 21.500 1 18.500 22 0Z" fill="#1065b5"/><path d="M22 0 30 3.500V26.500L22 30Z" fill="#27a5f3"/></svg></div>
    <div><svg viewBox="0 0 30 30"><path d="M0 11 15 1 30 11Z" fill="#0a5ea8"/><path d="M0 11H30V28H0Z" fill="#35b5ea"/><path d="M1 10H29L15 22Z" fill="#f0f0f0"/><path d="M0 11 15 20 0 28Z" fill="#58cdf3"/><path d="M0 28.500 30 11V28.500Z" fill="#1a90dd"/></svg></div>
    <div><svg viewBox="0 0 30 30"><path d="M0 8 4 6 22 22V30L6 19 3 23 0 21Z" fill="#8661c5"/><path d="M0 8V21L9 12 4 6Z" fill="#52368c"/><path d="M0 21 3 23 22 8V0Z" fill="#a57ddf"/><path d="M22 0 30 3V27L22 30Z" fill="#cda0ff"/></svg></div>
    <div><svg viewBox="0 0 30 30"><path d="M2 4V17Q10 21 18 17V4Z" fill="#f5cf35"/><ellipse cx="10" cy="4" rx="8" ry="3" fill="#f0b85a"/><path d="M10 7V20Q15 19 18 17V4Z" fill="#ffe14d"/><path d="M22 2H28V9M1 22V28H8" fill="none" stroke="#3fa34d" stroke-width="2.500"/><path d="M14 18 26 28M24 17 13 28" stroke="#e56a10" stroke-width="2.200"/><path d="M11 17 17 14M22 15Q22 19 27 17" fill="none" stroke="#e56a10" stroke-width="2.500"/></svg></div>
    <div><svg viewBox="0 0 30 30"><circle cx="15" cy="15" r="14.500" fill="#1ed760"/><path d="M6 10.500Q16 7.500 25 12M7 15.500Q15 13 23 17M8 20Q15 18 21.500 21.500" fill="none" stroke="#142a1c" stroke-width="2.500" stroke-linecap="round"/></svg></div>
    <div><svg viewBox="0 0 30 30"><rect width="30" height="30" rx="3" fill="#f37623"/><path d="M3 1H27V3Q15 5 3 3Z" fill="#f9b489"/><path d="M10 8.500Q6 7 6 11Q6 14 9 15Q6 16 6 19.500Q7 23 11 21.500V18.500Q15 15.500 19 18.500V21.500Q23 23 24 19.500Q24 16 21 15Q24 14 24 11Q24 7 20 8.500L19 12Q15 14.500 11 12Z" fill="none" stroke="#fff" stroke-width="3"/></svg></div>
    <div><svg viewBox="0 0 30 30"><circle cx="15" cy="15" r="14.800" fill="#1d8fec"/><path d="M5 15H20Q23 15 22 11Q24 12 24.500 14Q26 13.500 27 14.500Q26 17 23 17Q20 23 13 23Q5 23 5 15Z" fill="#fff"/><path d="M7 11H10V14H7ZM10.500 11H13.500V14H10.500ZM14 11H17V14H14ZM17.500 11H20V14H17.500ZM10.500 8H13.500V10.500H10.500ZM14 7H17V10.500H14Z" fill="#fff"/></svg></div>
    <div class="running"><svg viewBox="0 0 30 30"><path d="M0 4Q0 2 2 2H9L12 5V10H0Z" fill="#e29c12"/><path d="M0 7H12L15 5H30V28H0Z" fill="url(#gFold)"/><path d="M5 28V23Q5 21 7 21H23Q25 21 25 23V28Z" fill="#1174c8"/><path d="M9 24.500H21" stroke="#0b4f93" stroke-width="1.300"/></svg></div>
  </div>
  <div class="tray">
    <svg width="14" height="9" viewBox="0 0 14 9"><path d="M1 7.500 7 1.500 13 7.500" fill="none" stroke="#fff" stroke-width="2"/></svg>
    <svg width="20" height="14" viewBox="0 0 20 14"><path d="M4 6Q5 0 10 0Q15 0 16 6Z" fill="#a79aa9"/><path d="M4 13.500A4 4 0 0 1 4 5Q7 3 11 6.500L15 5.500Q20 6 20 10Q20 13.500 16 13.500Z" fill="#fff"/></svg>
    <span class="lang">TUR</span>
    <svg width="20" height="16" viewBox="0 0 20 16"><path d="M.700 5.500Q10-3 19.300 5.500" fill="none" stroke="#7b657e" stroke-width="1.500"/><path d="M3.500 8.500Q10 2.500 16.500 8.500M6.300 11.300Q10 8 13.700 11.300" fill="none" stroke="#fff" stroke-width="1.700"/><circle cx="10" cy="13.500" r="1.900" fill="#fff"/></svg>
    <svg width="21" height="16" viewBox="0 0 21 16"><path d="M1 5.500H4L8 1.500V14.500L4 10.500H1ZM10.500 5Q12.500 8 10.500 11M13 3Q16.500 8 13 13" fill="none" stroke="#fff" stroke-width="1.500"/><path d="M16 1Q21 8 16 15" fill="none" stroke="#7b657e" stroke-width="1.500"/></svg>
    <svg width="20" height="17" viewBox="0 0 20 17"><path d="M6 4H15Q17 4 17 6V14Q17 16 15 16H3Q1 16 1 14V10" fill="none" stroke="#fff" stroke-width="1.500"/><rect x="3.500" y="6.500" width="11.500" height="7.500" fill="#fff"/><path d="M18 8H19.500V12H18ZM5 0 0 7H3L2 11 7 4H4Z" fill="#fff"/></svg>
    <div class="clock">1:13 PM<br>10/30/2023</div>
    <svg width="17" height="19" viewBox="0 0 17 19"><path d="M8.500 0Q14 0 14.500 6V11L16.500 15H.500L2.500 11V6Q3 0 8.500 0ZM5.500 16.500H11.500Q11 19 8.500 19T5.500 16.500Z" fill="#efb8f3"/></svg>
  </div>
</div>
</body>
</html>
```
FILE: styles.css
```css
* { box-sizing: border-box; }
body { margin: 0; width: 1919px; height: 1079px; overflow: hidden; display: flex; flex-direction: column; background: #fff; color: #212529; font-family: "Open Sans", "Noto Sans", sans-serif; font-size: 19px; }
svg { flex: none; display: block; }
.defs { position: absolute; }
h1, h2, p { margin: 0; }

.tabstrip { height: 50px; flex: none; background: #0c2329; display: flex; align-items: center; padding-left: 8px; }
.tab-search { width: 35px; height: 36px; margin: 0 7px 2px 0; border: 0; border-radius: 12px; background: #283d44; display: grid; place-items: center; padding: 0; }
.tab { width: 297.5px; height: 50px; padding: 0 22px 0 10px; display: flex; align-items: center; color: #b4c8cf; font-size: 14.5px; font-weight: 500; position: relative; }
.tab-active { width: 290px; height: 43px; margin: 7px 8px 0 0; padding: 0 14px 7px 10px; background: #283d44; border-radius: 13px 13px 0 0; color: #e6edf0; }
.tab:not(.tab-active) + .tab::before { content: ""; width: 2px; height: 20px; background: #2a3d44; position: absolute; left: -4px; top: 15px; }
.fav { width: 20px; height: 20px; margin-right: 9px; }
.tab-title { flex: 1; white-space: nowrap; letter-spacing: -.12px; margin-right: 12px; }
.fade { -webkit-mask-image: linear-gradient(90deg, #000 87%, transparent); mask-image: linear-gradient(90deg, #000 87%, transparent); }
.x { width: 12px; height: 12px; color: #d3dde1; }
.newtab { width: 14px; height: 14px; margin-left: 11px; }
.tab:nth-of-type(5)::after { content: ""; width: 2px; height: 20px; background: #2a3d44; position: absolute; right: 3px; top: 15px; }
.winbtns { margin-left: auto; padding-right: 21px; display: flex; gap: 43px; }

.toolbar { height: 58px; flex: none; background: #283d44; display: flex; align-items: center; padding-left: 19px; }
.toolbar > svg { margin-right: 29px; }
.toolbar > svg:nth-child(3) { margin-right: 23px; }
.toolbar > .dots { margin-right: 0; }
.omnibox { width: 1148px; flex: none; height: 43px; border-radius: 22px; background: #13282e; display: flex; align-items: center; padding: 0 19px 0 7px; }
.chip { width: 129px; height: 30px; border-radius: 15px; background: #283d44; display: flex; align-items: center; gap: 6px; padding-left: 5px; color: #e6edf0; font-size: 14.300px; font-weight: 600; letter-spacing: -.2px; white-space: nowrap; }
.url { flex: 1; padding-left: 10px; color: #fff; font-size: 17px; letter-spacing: -.33px; }
.url span { color: #c0c8cb; }
.key { margin-right: 18px; }
.exts { display: flex; gap: 25px; margin-left: 23px; }
.exts svg { width: 20px; height: 20px; }
.badged { position: relative; }
.badged b { position: absolute; left: 10px; top: 10px; width: 18px; height: 18px; border-radius: 5px; background: #6a3bc4; color: #fff; font-size: 12px; line-height: 18px; text-align: center; }
.vsep { width: 2px; height: 20px; background: #45585f; margin: 0 23px 0 22px; }
.toolbar > .panel { margin-right: 23px; }
.avatar { width: 25px; height: 25px; border-radius: 50%; background: #0097a7; color: #fff; font-size: 13.500px; line-height: 25px; text-align: center; margin-right: 31px; }

.bookmarks { height: 43px; flex: none; background: #283d44; display: grid; grid-template-columns: 138px 180px 194px 197px 84px 112px 127px 103px 125px 148px 144px 305px 1fr; padding: 0 0 8px 17px; align-items: center; }
.bookmarks a { display: flex; align-items: center; gap: 8px; color: #c9ced0; font-size: 14.500px; font-weight: 500; letter-spacing: .1px; white-space: nowrap; }

.navbar { height: 70px; flex: none; background: #0d6efd; display: flex; align-items: center; justify-content: space-between; padding: 0 44px 0 15px; }
.brand { color: #fff; font-size: 24px; letter-spacing: -.4px; }
.links { display: flex; gap: 20px; white-space: nowrap; }
.navbar .links { padding-top: 2px; letter-spacing: -.08px; }
.navbar .links a { color: #9ec5fe; }
.navbar .links .current { color: #fff; }

.content { height: 618px; flex: none; display: grid; grid-template-columns: 795px 625px; column-gap: 185px; padding: 7px 0 0 150px; align-items: start; }
.intro { text-align: center; }
.intro h1 { font-size: 48px; line-height: 60px; font-weight: 600; letter-spacing: -.3px; color: #dc3545; }
.intro h2 { margin-top: 9px; font-size: 33.500px; line-height: 42px; font-weight: 600; letter-spacing: -.6px; color: #55595c; }
.date { margin-top: 10px; line-height: 30px; letter-spacing: .04px; color: #dc3545; }
.accordion { margin-top: 19px; height: 203px; border: 1px solid #dee2e6; border-radius: 8px; overflow: hidden; text-align: left; }
.acc-head { height: 64px; padding: 4px 27px 0 25px; display: flex; align-items: center; justify-content: space-between; }
.acc-head svg { margin-bottom: 3px; }
.open { height: 65px; background: #cfe2ff; color: #052c65; border-bottom: 1px solid #dee2e6; }
.acc-body { height: 71px; padding: 21px 25px 0; line-height: 30px; border-bottom: 1px solid #dee2e6; }

.map { width: 625px; height: 375px; margin-top: 13px; position: relative; overflow: hidden; }
.tiles { width: 625px; height: 375px; }
.city { font: 43px "Noto Sans", sans-serif; fill: #3c3c3c; stroke: #fff; stroke-width: 6px; stroke-opacity: .7; paint-order: stroke; }
.province { font: italic 40px "Noto Sans", sans-serif; fill: #8d6c9a; stroke: #fff; stroke-width: 5px; stroke-opacity: .7; paint-order: stroke; }
.zoom { position: absolute; left: 14px; top: 14px; width: 39px; border: 1px solid #999; border-radius: 3px; background: #fff; box-shadow: 0 0 0 1px rgba(0, 0, 0, .15); }
.zoom span { height: 37px; display: grid; place-items: center; }
.zoom span + span { border-top: 1px solid #ccc; height: 38px; }
.attribution { position: absolute; right: 0; bottom: 0; height: 21px; display: flex; align-items: center; gap: 4px; padding: 0 6px; background: rgba(255, 255, 255, .8); color: #333; font: 15px "Liberation Sans", Arial, sans-serif; white-space: nowrap; }
.attribution a { color: #0078a8; }

.footer { height: 181px; flex: none; background: #e2e3e5; display: flex; flex-direction: column; align-items: center; }
.footer .links { height: 91px; width: 100%; padding-top: 1px; justify-content: center; align-items: center; border-bottom: 1px solid #dddfe1; letter-spacing: -.12px; color: #0d6efd; }
.footer p { margin-top: 21px; line-height: 30px; color: #55595c; }

.taskbar { height: 59px; flex: none; border-top: 1px solid #4a5055; display: flex; align-items: center; color: #fff; background: linear-gradient(90deg, #1b2529 0, #1b252a 480px, #17243a 590px, #1e2058 690px, #2a1c48 780px, #331b3a 860px, #3b1046 1040px, #3a1140 1400px, #371336 1620px, #2f1a30 1919px); }
.weather { width: 475px; padding-left: 28px; display: flex; gap: 5px; align-items: center; font-size: 14.300px; line-height: 20px; letter-spacing: 0; }
.weather svg { margin-top: -9px; margin-right: -1px; }
.weather span { color: #c5c9cb; }
.search { width: 275px; height: 40px; margin-left: 16px; border: 1px solid rgba(255, 255, 255, .18); border-radius: 20px; background: rgba(255, 255, 255, .14); display: flex; align-items: center; padding: 0 6px 0 14px; color: #d6d9e0; font-size: 17px; letter-spacing: -.4px; }
.search span { flex: 1; padding-left: 12px; }
.apps { display: flex; gap: 5px; margin-left: 5px; }
.apps div { width: 50px; height: 50px; padding: 10px; border-radius: 5px; position: relative; }
.apps svg { width: 30px; height: 30px; }
.apps .active { background: rgba(255, 255, 255, .08); border: 1px solid rgba(255, 255, 255, .06); padding: 9px; }
.active::after, .running::after { content: ""; position: absolute; bottom: 1px; left: 21px; width: 8px; height: 4px; border-radius: 2px; background: #a18fa5; }
.apps .active::after { left: 14px; width: 20px; background: #d9a3e3; }
.tray { margin-left: auto; display: grid; grid-template-columns: 39px 44px 51px 29px 30px 24px 94px 30px; align-items: center; font-size: 14.500px; letter-spacing: .1px; padding-right: 23px; }
.clock { text-align: right; line-height: 20px; }
.tray > svg:last-child { margin-left: 10px; }
```
